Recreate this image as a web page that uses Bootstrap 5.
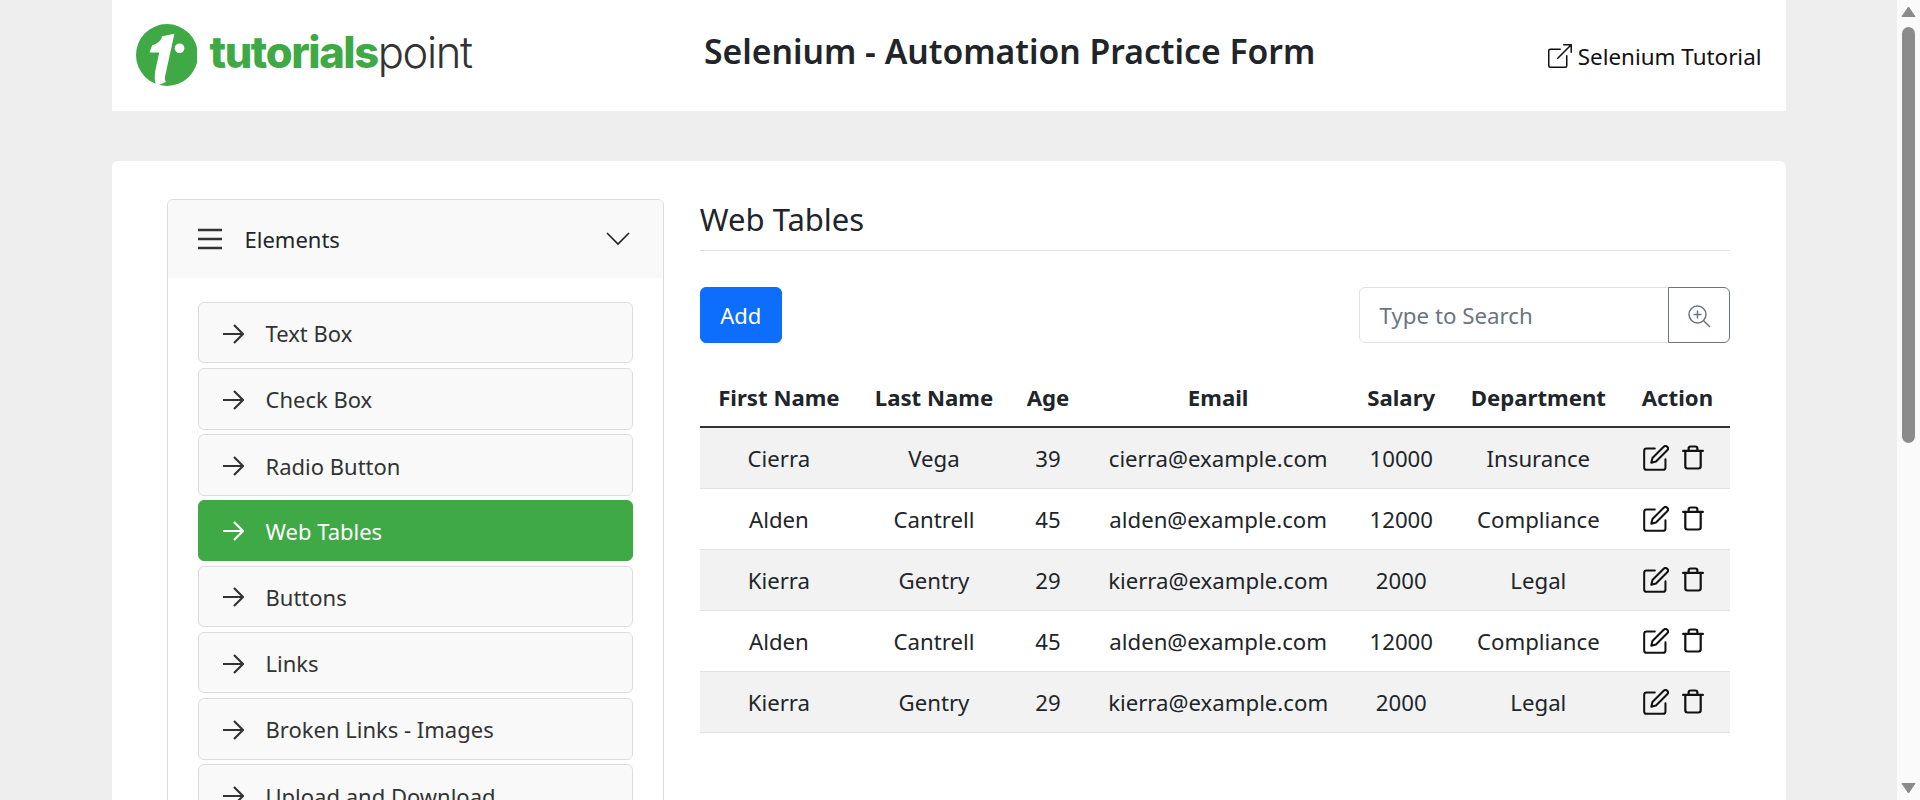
<!DOCTYPE html>
<html lang="en">
<head>
    <meta charset="UTF-8">
    <meta name="viewport" content="width=device-width, initial-scale=1.0">
    <link href="https://cdn.jsdelivr.net/npm/bootstrap@5.3.3/dist/css/bootstrap.min.css" rel="stylesheet">
    <title>Selenium - Automation Practice Form</title>
    <style>
        body {
            background-color: #eee;
            font-family: "Noto Sans", sans-serif;
            font-size: 22px;
            color: #212529;
            padding-right: 23px;
        }

        .fake-scroll { position: fixed; top: 0; right: 0; bottom: 0; width: 23px; background: #fafafa; padding: 6px 0; display: flex; flex-direction: column; }
        .fake-scroll-thumb { width: 13px; height: 416px; margin-top: 9px; margin-left: 5px; background: #8b8b8b; border-radius: 7px; }
        .fake-scroll-down { margin-top: auto; }

        .page-wrap { width: 1674px; margin: 0 auto; }

        .site-head { height: 111px; background: #fff; padding-left: 24px; padding-right: 24px; }
        .brand-logo { width: 336px; gap: 12px; flex: none; white-space: nowrap; margin-top: -1px; }
        .brand-name { font-family: "Inter", sans-serif; font-size: 43.5px; line-height: 1; letter-spacing: -1.4px; color: #3fa946; font-weight: 800; margin-bottom: 5px; }
        .brand-name span { color: #333; font-weight: 300; }
        .site-title { font-size: 33.7px; font-weight: 600; margin: 0 0 8px; }
        .tutorial-link { color: #111; text-decoration: none; font-size: 22.4px; gap: 6px; padding-top: 2px; }

        .main-panel { background: #fff; margin-top: 50px; border-radius: 6px; padding: 38px 55px 40px 55px; }
        .main-row { --bs-gutter-x: 36px; }

        .side-menu { --bs-accordion-border-color: #ddd; --bs-accordion-border-radius: 6px; --bs-accordion-inner-border-radius: 5px; --bs-accordion-active-bg: #f9f9f9; --bs-accordion-active-color: #212529; --bs-accordion-btn-bg: #f9f9f9; --bs-accordion-btn-color: #212529; }
        .side-menu .accordion-button { height: 78px; padding: 0 33px 0 30px; font-size: 22px; gap: 23px; box-shadow: none; }
        .side-menu .accordion-button::after { display: none; }
        .side-menu .menu-chevron { margin-left: auto; }
        .side-menu .accordion-body { padding: 24px 30px; }
        .menu-list { gap: 4.8px; }
        .menu-list .list-group-item { height: 61.4px; background: #f9f9f9; border: 1px solid #ddd; border-radius: 6px; color: #333; display: flex; align-items: center; gap: 22px; padding: 2px 0 0 23px; margin: 0; }
        .menu-list .list-group-item.active { background: #3fa946; border-color: #3fa946; color: #fff; }

        .section-title { font-size: 31px; font-weight: 400; line-height: 1.2; margin: 0; padding: 2px 0 12px; border-bottom: 1px solid #dee2e6; }
        .tool-bar { margin-top: 36px; margin-bottom: 28px; }
        .add-btn { height: 56px; width: 82px; font-size: 22px; padding: 0; }
        .search-box { width: 371px; }
        .search-box .form-control { height: 56px; font-size: 22.3px; padding-left: 19px; }
        .search-box .form-control::placeholder { color: #6c757d; }
        .search-box .btn { width: 62px; padding: 0; }

        .data-table { font-size: 22.2px; margin: 0; table-layout: fixed; --bs-table-striped-bg: #f2f2f2; --bs-table-striped-color: #212529; }
        .data-table th, .data-table td { text-align: center; vertical-align: middle; white-space: nowrap; padding: 2px 0 0; }
        .data-table thead tr { height: 56px; }
        .data-table tbody tr { height: 61px; }
        .data-table thead th { border-bottom: 2px solid #333; padding: 0 0 3px; }
        .data-table th:nth-child(1) { width: 158px; }
        .data-table th:nth-child(2) { width: 152px; }
        .data-table th:nth-child(3) { width: 76px; }
        .data-table th:nth-child(4) { width: 264px; }
        .data-table th:nth-child(5) { width: 102px; }
        .data-table th:nth-child(6) { width: 172px; }
        .data-table th:nth-child(7) { width: 106px; }
        .act-cell { gap: 13px; color: #111; padding-right: 7px; margin-top: -2px; }
    </style>
</head>
<body>
<div class="page-wrap">
    <header class="site-head d-flex align-items-center justify-content-between">
        <a class="brand-logo d-flex align-items-center text-decoration-none" href="#">
            <svg width="64" height="64" viewBox="0 0 64 64">
                <circle cx="32" cy="32" r="32" fill="#3fa946"/>
                <path d="M39.7 10 27 12.7c-1 4.300-5 8.300-10.300 9.300L14 29.300h10L20 48c-1 6-1 10 1 16l10-4c-1.500-2-1.500-5-.3-9z" fill="#fff"/>
                <circle cx="45" cy="25" r="5" fill="#fff"/>
            </svg>
            <span class="brand-name">tutorials<span>point</span></span>
        </a>
        <h1 class="site-title">Selenium - Automation Practice Form</h1>
        <a class="tutorial-link d-flex align-items-center" href="#">
            <svg width="24" height="24" viewBox="0 0 16 16" fill="#111">
                <path d="M8.636 3.5a.5.5 0 0 0-.5-.5H1.500A1.500 1.500 0 0 0 0 4.500v10A1.500 1.500 0 0 0 1.500 16h10a1.500 1.500 0 0 0 1.500-1.500V7.864a.5.5 0 0 0-1 0V14.500a.5.5 0 0 1-.5.5h-10a.5.5 0 0 1-.5-.5v-10a.5.5 0 0 1 .5-.5h6.636a.5.5 0 0 0 .5-.5z"/>
                <path d="M16 .5a.5.5 0 0 0-.5-.5h-5a.5.5 0 0 0 0 1h3.793L6.146 9.146a.5.5 0 1 0 .708.708L15 1.707V5.500a.5.5 0 0 0 1 0v-5z"/>
            </svg>
            Selenium Tutorial
        </a>
    </header>

    <main class="main-panel">
        <div class="row main-row">
            <div class="col-4">
                <div class="accordion side-menu">
                    <div class="accordion-item">
                        <h2 class="accordion-header">
                            <button class="accordion-button" type="button">
                                <svg width="24" height="24" viewBox="0 0 24 24" fill="none" stroke="#333" stroke-width="2.400"><path d="M0 3h24M0 12h24M0 21h24"/></svg>
                                Elements
                                <svg class="menu-chevron" width="24" height="14" viewBox="0 0 24 14" fill="none" stroke="#222" stroke-width="1.600"><path d="M1 1l11 11L23 1"/></svg>
                            </button>
                        </h2>
                        <div class="accordion-collapse collapse show">
                            <div class="accordion-body">
                                <ul class="list-group menu-list" id="menu"></ul>
                            </div>
                        </div>
                    </div>
                </div>
            </div>
            <div class="col-8">
                <h2 class="section-title">Web Tables</h2>
                <div class="tool-bar d-flex justify-content-between">
                    <button class="btn btn-primary add-btn" type="button">Add</button>
                    <div class="input-group search-box">
                        <input class="form-control" type="text" placeholder="Type to Search">
                        <button class="btn btn-outline-secondary" type="button">
                            <svg width="24" height="24" viewBox="0 0 24 24" fill="none" stroke="currentColor" stroke-width="1.500"><circle cx="10.500" cy="10.500" r="8.500"/><path d="M16.700 16.700 23 23M10.500 6.500v8M6.500 10.500h8"/></svg>
                        </button>
                    </div>
                </div>
                <table class="table table-striped data-table">
                    <thead>
                        <tr><th>First Name</th><th>Last Name</th><th>Age</th><th>Email</th><th>Salary</th><th>Department</th><th>Action</th></tr>
                    </thead>
                    <tbody id="rows"></tbody>
                </table>
            </div>
        </div>
    </main>
</div>

<!-- scrollbars are hidden in the headless run, so the bar is drawn -->
<div class="fake-scroll">
    <svg class="d-block mx-auto flex-shrink-0" width="15" height="12" viewBox="0 0 15 12"><path d="M7.500 1 14 10.500H1z" fill="#8b8b8b" stroke="#8b8b8b" stroke-linejoin="round"/></svg>
    <div class="fake-scroll-thumb"></div>
    <svg class="d-block mx-auto flex-shrink-0 fake-scroll-down" width="15" height="12" viewBox="0 0 15 12"><path d="M7.500 11 14 1.500H1z" fill="#8b8b8b" stroke="#8b8b8b" stroke-linejoin="round"/></svg>
</div>

<script src="https://cdn.jsdelivr.net/npm/bootstrap@5.3.3/dist/js/bootstrap.bundle.min.js"></script>
<script>
    const menuItems = ["Text Box", "Check Box", "Radio Button", "Web Tables", "Buttons", "Links", "Broken Links - Images", "Upload and Download"];
    const arrow = '<svg width="22" height="20" viewBox="0 0 22 20" fill="none" stroke="currentColor" stroke-width="2.200"><path d="M1 10h20M12 1l9 9-9 9"/></svg>';

    document.getElementById("menu").innerHTML = menuItems.map(function (name) {
        const cls = name === "Web Tables" ? "list-group-item active" : "list-group-item";
        return '<li class="' + cls + '">' + arrow + name + "</li>";
    }).join("");

    const people = [
        ["Cierra", "Vega", 39, "cierra@example.com", 10000, "Insurance"],
        ["Alden", "Cantrell", 45, "alden@example.com", 12000, "Compliance"],
        ["Kierra", "Gentry", 29, "kierra@example.com", 2000, "Legal"],
        ["Alden", "Cantrell", 45, "alden@example.com", 12000, "Compliance"],
        ["Kierra", "Gentry", 29, "kierra@example.com", 2000, "Legal"]
    ];

    const editIcon = '<svg width="26" height="26" viewBox="1 1 22 22" fill="none" stroke="currentColor" stroke-width="1.700" stroke-linecap="round" stroke-linejoin="round"><path d="M11 4H4a2 2 0 0 0-2 2v14a2 2 0 0 0 2 2h14a2 2 0 0 0 2-2v-7"/><path d="M18.500 2.500a2.121 2.121 0 0 1 3 3L12 15l-4 1 1-4 9.500-9.500z"/></svg>';
    const trashIcon = '<svg width="22" height="25" viewBox="2 1 20 22" fill="none" stroke="currentColor" stroke-width="2" stroke-linecap="round" stroke-linejoin="round"><path d="M3 6h18M19 6v14a2 2 0 0 1-2 2H7a2 2 0 0 1-2-2V6m3 0V4a2 2 0 0 1 2-2h4a2 2 0 0 1 2 2v2"/></svg>';

    document.getElementById("rows").innerHTML = people.map(function (p) {
        return "<tr>" + p.map(function (v) { return "<td>" + v + "</td>"; }).join("") +
            '<td><div class="act-cell d-flex justify-content-center align-items-center">' + editIcon + trashIcon + "</div></td></tr>";
    }).join("");
</script>
</body>
</html>
